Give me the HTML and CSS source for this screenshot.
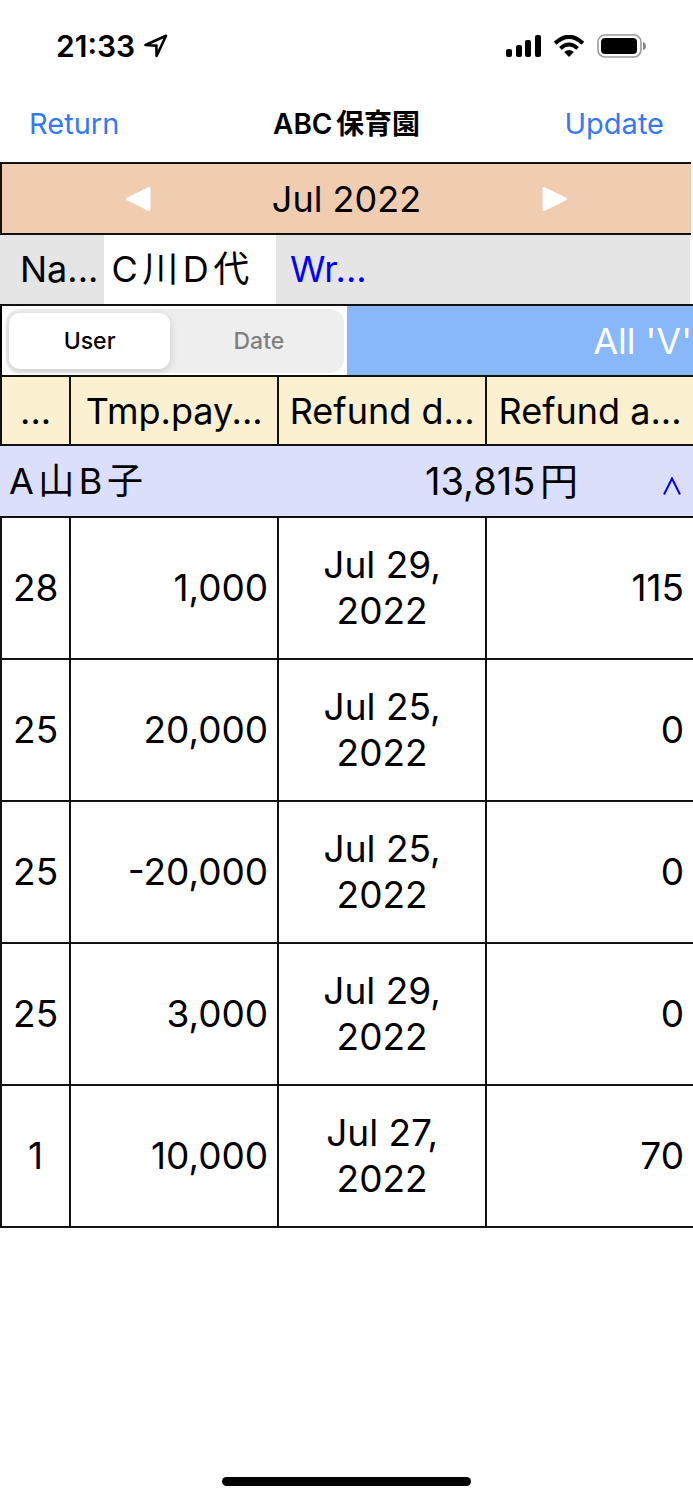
FILE: index.html
```html
<!DOCTYPE html>
<html lang="ja">

<head>
  <meta charset="UTF-8">
  <meta name="viewport" content="width=device-width, initial-scale=1.0">
  <title>ABC保育園</title>
  <link rel="stylesheet" href="styles.css">
</head>

<body>
  <div class="status-bar">
    <div class="clock">
      <span>21:33</span>
      <svg width="24" height="24" viewBox="0 0 24 24" fill="none" stroke="#000" stroke-width="2.6" stroke-linejoin="round">
        <path d="M1.5 11 L22 1.8 L12.6 22 L12.4 11.6 Z" />
      </svg>
    </div>
    <div class="status-icons">
      <svg width="35" height="22" viewBox="0 0 35 22">
        <rect x="0" y="14" width="6" height="8" rx="2" />
        <rect x="10" y="10" width="6" height="12" rx="2" />
        <rect x="19" y="5" width="6" height="17" rx="2" />
        <rect x="29" y="0" width="6" height="22" rx="2" />
      </svg>
      <svg width="30" height="22" viewBox="0 0 30 22">
        <path d="M1.2 8.2 Q15 -4.6 28.8 8.2" fill="none" stroke="#000" stroke-width="4" />
        <path d="M6.4 13.4 Q15 5.6 23.6 13.4" fill="none" stroke="#000" stroke-width="3.8" />
        <path d="M10.2 17 Q15 13 19.8 17 L15 22 Z" />
      </svg>
      <svg width="49" height="24" viewBox="0 0 49 24">
        <rect x="1" y="1" width="43" height="22" rx="7" fill="none" stroke="#999" stroke-width="1.6" />
        <rect x="4" y="4" width="36" height="16" rx="4" />
        <path d="M46 8 Q49 9 49 12 Q49 15 46 16 Z" fill="#888" />
      </svg>
    </div>
  </div>

  <header class="nav-bar">
    <a href="#">Return</a>
    <h1>ABC保育園</h1>
    <a href="#" class="update">Update</a>
  </header>

  <main>
    <div class="month-bar">
      <button type="button" aria-label="Previous month">
        <svg width="26" height="26" viewBox="0 0 26 26" fill="#fff" stroke="#fff" stroke-width="3" stroke-linejoin="round">
          <path d="M24 2.5 V23.5 L2.5 13 Z" />
        </svg>
      </button>
      <span class="month">Jul 2022</span>
      <button type="button" aria-label="Next month">
        <svg width="26" height="26" viewBox="0 0 26 26" fill="#fff" stroke="#fff" stroke-width="3" stroke-linejoin="round">
          <path d="M2 2.5 V23.5 L23.5 13 Z" />
        </svg>
      </button>
    </div>

    <div class="name-bar">
      <span class="name-label">Na...</span>
      <button type="button" class="name-value">C川D代</button>
      <button type="button" class="write">Wr...</button>
    </div>

    <div class="filter-bar">
      <div class="segment-cell">
        <div class="segment">
          <input type="radio" name="group" id="by-user" checked>
          <label for="by-user">User</label>
          <input type="radio" name="group" id="by-date">
          <label for="by-date">Date</label>
        </div>
      </div>
      <button type="button" class="all-btn">All 'V'</button>
    </div>

    <table>
      <colgroup>
        <col class="col-day">
        <col class="col-wide">
        <col class="col-wide">
        <col class="col-wide">
      </colgroup>
      <thead>
        <tr>
          <th>...</th>
          <th>Tmp.pay...</th>
          <th>Refund d...</th>
          <th>Refund a...</th>
        </tr>
      </thead>
      <tbody>
        <tr class="group-row">
          <td colspan="4">
            <div class="group">
              <span class="group-name">A山B子</span>
              <span class="group-total">13,815円</span>
              <button type="button" aria-label="Collapse">
                <svg width="18" height="18" viewBox="0 0 18 18" fill="none" stroke="#00f" stroke-width="2">
                  <path d="M1 17.5 L9 1.5 L17 17.5" />
                </svg>
              </button>
            </div>
          </td>
        </tr>
        <tr>
          <td>28</td>
          <td class="num">1,000</td>
          <td>Jul 29,<br>2022</td>
          <td class="num">115</td>
        </tr>
        <tr>
          <td>25</td>
          <td class="num">20,000</td>
          <td>Jul 25,<br>2022</td>
          <td class="num">0</td>
        </tr>
        <tr>
          <td>25</td>
          <td class="num">-20,000</td>
          <td>Jul 25,<br>2022</td>
          <td class="num">0</td>
        </tr>
        <tr>
          <td>25</td>
          <td class="num">3,000</td>
          <td>Jul 29,<br>2022</td>
          <td class="num">0</td>
        </tr>
        <tr>
          <td>1</td>
          <td class="num">10,000</td>
          <td>Jul 27,<br>2022</td>
          <td class="num">70</td>
        </tr>
      </tbody>
    </table>
  </main>

  <div class="home-indicator"></div>
</body>

</html>
```

FILE: styles.css
```css
* {
  box-sizing: border-box;
}

body {
  margin: 0;
  min-height: 100vh;
  display: flex;
  flex-direction: column;
  background-color: #fff;
  color: #000;
  font-family: Inter, "Noto Sans CJK JP", sans-serif;
  font-size: 36px;
  line-height: 46px;
  text-autospace: normal;
}

button {
  border: 0;
  padding: 0;
  background: none;
  color: inherit;
  font: inherit;
  cursor: pointer;
}

svg {
  display: block;
}

.status-bar {
  display: flex;
  justify-content: space-between;
  align-items: center;
  height: 92px;
  padding: 0 47px 0 56px;
}

.clock {
  display: flex;
  align-items: center;
  gap: 9px;
  font-size: 30px;
  font-weight: 600;
}

.status-icons {
  display: flex;
  align-items: center;
  gap: 13px;
}

.nav-bar {
  display: grid;
  grid-template-columns: 1fr auto 1fr;
  align-items: center;
  height: 70px;
  padding: 0 29px 7px;
  font-size: 29px;
}

.nav-bar h1 {
  margin: 0;
  font-size: 28px;
  font-weight: 600;
}

.nav-bar a {
  color: #3478f6;
  text-decoration: none;
}

.nav-bar .update {
  text-align: right;
}

.month-bar {
  display: grid;
  grid-template-columns: 1fr 1fr 1fr;
  align-items: center;
  height: 73px;
  margin-right: 2px;
  border: 2px solid #111;
  border-right: 0;
  background-color: #f0cdb1;
}

.month-bar button {
  height: 69px;
  display: flex;
  align-items: center;
  justify-content: center;
}

.month {
  text-align: center;
}

.month-bar button:first-child {
  padding-left: 42px;
}

.month-bar button:last-child {
  padding-right: 42px;
}

.name-bar {
  display: flex;
  height: 69px;
  margin-right: 3px;
  line-height: 69px;
  background-color: #e5e5e5;
}

.name-label {
  width: 15%;
  padding-left: 20px;
}

.name-value {
  width: 25%;
  padding-left: 8px;
  background-color: #fff;
  text-align: left;
}

.write {
  padding-left: 14px;
  color: #00f;
}

.filter-bar {
  display: flex;
  height: 73px;
  border-top: 2px solid #111;
  border-bottom: 2px solid #111;
}

.segment-cell {
  width: 50%;
  padding: 3px;
  padding-left: 4px;
  border-left: 2px solid #000;
}

.segment {
  display: flex;
  gap: 8px;
  height: 64px;
  padding: 4px;
  padding-left: 3px;
  border-radius: 14px;
  background-color: #eee;
}

.segment input {
  position: absolute;
  opacity: 0;
}

.segment label {
  flex: 1;
  border-radius: 11px;
  color: #808080;
  font-size: 23px;
  font-weight: 500;
  line-height: 56px;
  text-align: center;
}

.segment input:checked + label {
  background-color: #fff;
  box-shadow: 0 2px 8px rgba(0, 0, 0, 0.16);
  color: #000;
}

.all-btn {
  flex: 1;
  padding-right: 1px;
  background-color: #88b8fa;
  color: #fff;
  text-align: right;
}

table {
  width: 100%;
  table-layout: fixed;
  border-collapse: separate;
  border-spacing: 0;
}

.col-day {
  width: 10%;
}

.col-wide {
  width: 30%;
}

th,
td {
  padding: 0;
  border-left: 2px solid #111;
  border-bottom: 2px solid #111;
  font-weight: 400;
  text-align: center;
  white-space: nowrap;
}

th {
  height: 69px;
  background-color: #fbf0d0;
}

td {
  height: 142px;
  font-size: 37px;
}

.num {
  padding-right: 9px;
  text-align: right;
}

.group-row td {
  height: 72px;
  border-left: 0;
  background-color: #dbdffc;
}

.group {
  display: flex;
  align-items: center;
  padding: 0 12px 0 9px;
  font-size: 36px;
}

.group-name {
  flex: 1;
  text-align: left;
}

.group-total {
  font-size: 38px;
}

.group button {
  width: 103px;
  padding-top: 10px;
  display: flex;
  justify-content: flex-end;
}

.home-indicator {
  width: 36%;
  height: 9px;
  margin: auto auto 14px;
  border-radius: 5px;
  background-color: #000;
}
```
